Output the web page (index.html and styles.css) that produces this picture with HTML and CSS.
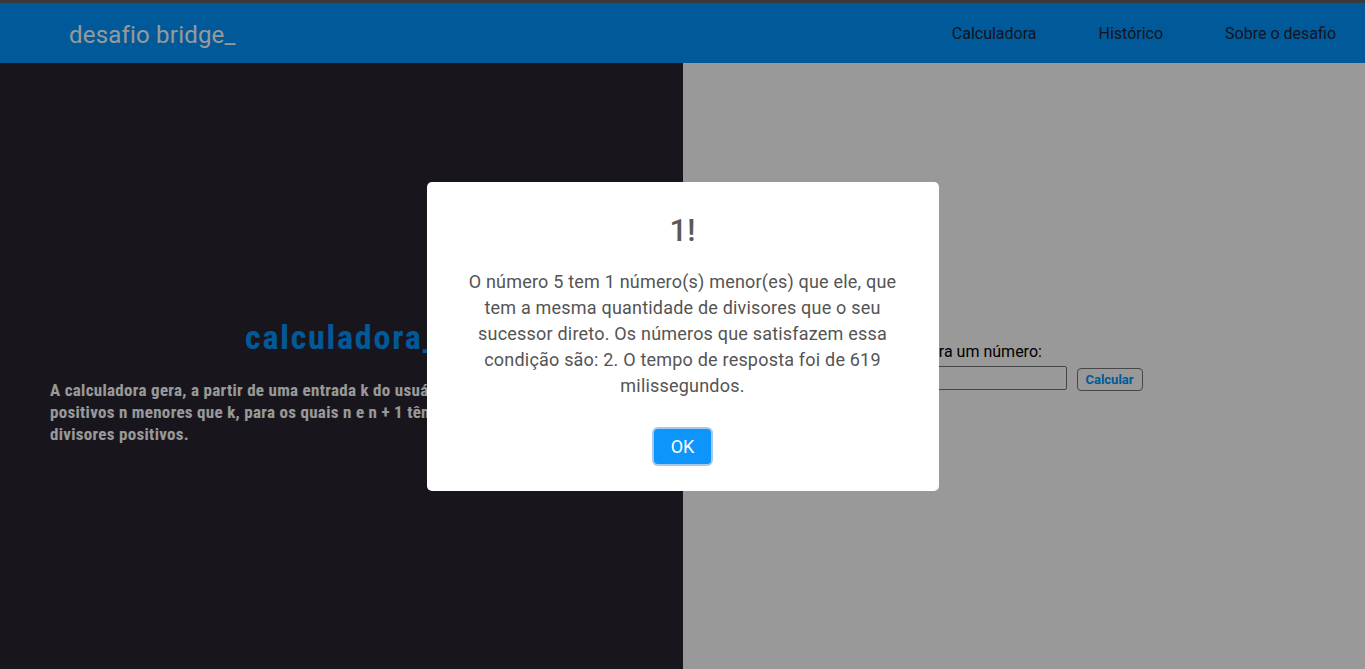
FILE: index.html
```html
<!DOCTYPE html>
<html lang="pt-BR">
<head>
<meta charset="utf-8">
<title>desafio bridge_</title>
<link rel="stylesheet" href="styles.css">
</head>
<body>
<header class="navbar">
  <a class="brand" href="#">desafio bridge_</a>
  <nav class="nav-links">
    <a href="#">Calculadora</a>
    <a href="#">Histórico</a>
    <a href="#">Sobre o desafio</a>
  </nav>
</header>
<main class="main">
  <section class="intro">
    <h1 class="intro-title">calculadora_</h1>
    <p class="intro-text">A calculadora gera, a partir de uma entrada k do usuário, a quantidade de inteiros positivos n menores que k, para os quais n e n + 1 têm a mesma quantidade de divisores positivos.</p>
  </section>
  <section class="calc">
    <form class="calc-form">
      <label class="calc-label" for="num">Insira um número:</label>
      <div class="calc-row">
        <input class="calc-input" id="num" type="text">
        <button class="calc-btn" type="button">Calcular</button>
      </div>
    </form>
  </section>
</main>
<div class="overlay">
  <div class="popup">
    <h2 class="popup-title">1!</h2>
    <div class="popup-text">O número 5 tem 1 número(s) menor(es) que ele, que tem a mesma quantidade de divisores que o seu sucessor direto. Os números que satisfazem essa condição são: 2. O tempo de resposta foi de 619 milissegundos.</div>
    <div class="popup-actions">
      <button class="popup-ok" type="button">OK</button>
    </div>
  </div>
</div>
</body>
</html>
```

FILE: styles.css
```css
* { box-sizing: border-box; }

html, body {
  margin: 0;
  height: 100%;
}

body {
  font-family: Roboto, "Noto Sans", sans-serif;
  background: #fff;
  overflow: hidden;
}

.navbar {
  height: 63px;
  border-top: 3px solid #616161;
  background: #0096ff;
  display: flex;
  align-items: center;
  justify-content: space-between;
  padding: 0 29px 0 69px;
}

.brand {
  color: #fff;
  font-size: 24px;
  text-decoration: none;
  margin-top: 3px;
  letter-spacing: 0.2px;
}

.nav-links {
  display: flex;
  gap: 62px;
}

.nav-links a {
  color: #1f2436;
  font-size: 16px;
  text-decoration: none;
}

.main {
  height: calc(100% - 63px);
  display: grid;
  grid-template-columns: 683px 1fr;
}

.intro {
  background: #28262f;
  display: flex;
  flex-direction: column;
  justify-content: center;
  padding: 31px 20px 0 50px;
}

.intro-title {
  margin: 0 30px 23px 0;
  text-align: center;
  color: #0096ff;
  font-family: "Roboto Condensed", "Liberation Sans Narrow", Roboto, sans-serif;
  font-weight: 700;
  font-size: 34px;
  line-height: 38px;
  letter-spacing: 1.8px;
}

.intro-text {
  margin: 0;
  color: #fff;
  font-family: "Roboto Condensed", "Liberation Sans Narrow", Roboto, sans-serif;
  font-weight: 700;
  font-size: 17px;
  line-height: 22px;
  letter-spacing: 0.3px;
}

.calc {
  background: #fff;
  display: flex;
  align-items: center;
  justify-content: center;
  padding-left: 8px;
}

.calc-form {
  display: flex;
  flex-direction: column;
  gap: 4px;
}

.calc-label {
  font-size: 16px;
  line-height: 20px;
  color: #000;
}

.calc-row {
  display: flex;
  align-items: center;
  gap: 10px;
}

.calc-input {
  width: 153px;
  height: 24px;
  border: 1px solid #767676;
  border-radius: 2px;
  background: #fff;
}

.calc-btn {
  height: 23px;
  width: 66px;
  margin-top: 2px;
  padding: 0;
  background: #fff;
  border: 1px solid #767676;
  border-radius: 4px;
  color: #0096ff;
  font-family: Roboto, sans-serif;
  font-weight: 700;
  font-size: 13px;
}

.overlay {
  position: fixed;
  inset: 0;
  background: rgba(0, 0, 0, 0.4);
  display: flex;
  align-items: center;
  justify-content: center;
  padding-top: 4px;
}

.popup {
  width: 512px;
  background: #fff;
  border-radius: 5px;
  padding: 29px 0 22px;
  display: flex;
  flex-direction: column;
  align-items: center;
}

.popup-title {
  margin: 0;
  font-size: 31px;
  line-height: 40px;
  font-weight: 500;
  color: #595959;
}

.popup-text {
  margin: 18px 38px 5.4px;
  text-align: center;
  font-size: 18px;
  line-height: 26px;
  letter-spacing: 0.2px;
  color: #545454;
}

.popup-actions {
  margin-top: 20px;
  display: flex;
  justify-content: center;
}

.popup-ok {
  margin: 5px;
  width: 57px;
  height: 35px;
  padding: 0;
  border: 0;
  border-radius: 4px;
  background: #0d95fb;
  color: #fff;
  font-family: Roboto, sans-serif;
  font-size: 18px;
  box-shadow: 0 0 0 2px #a8c8ea;
}
```
